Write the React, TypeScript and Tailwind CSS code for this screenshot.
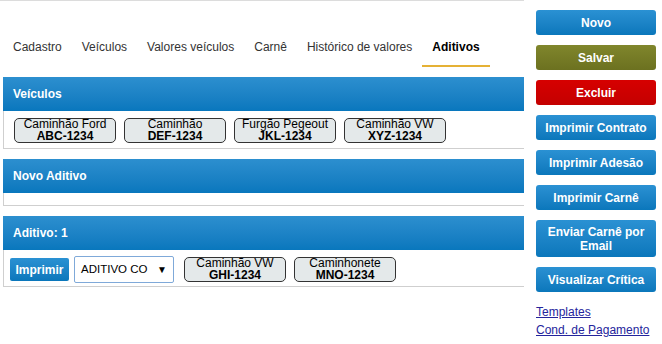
import type { ReactNode } from 'react';

const tabs = ['Cadastro', 'Veículos', 'Valores veículos', 'Carnê', 'Histórico de valores', 'Aditivos'];

const veiculos = [
  { nome: 'Caminhão Ford', placa: 'ABC-1234' },
  { nome: 'Caminhão', placa: 'DEF-1234' },
  { nome: 'Furgão Pegeout', placa: 'JKL-1234' },
  { nome: 'Caminhão VW', placa: 'XYZ-1234' },
];

const aditivoVeiculos = [
  { nome: 'Caminhão VW', placa: 'GHI-1234' },
  { nome: 'Caminhonete', placa: 'MNO-1234' },
];

function Chip({ nome, placa }: { nome: string; placa: string }) {
  return (
    <div className="w-[102px] h-[25px] shrink-0 flex flex-col items-center justify-center rounded-[5px] border border-[#333] bg-[#e4e9ea] text-[12px] leading-[11.5px] text-black overflow-hidden whitespace-nowrap">
      <span>{nome}</span>
      <span className="font-bold">{placa}</span>
    </div>
  );
}

function PanelHeader({ children }: { children: ReactNode }) {
  return (
    <div className="h-[34px] flex items-center pl-[10px] bg-gradient-to-b from-[#2c8fcf] to-[#0877bd] text-white text-[12px] font-bold">
      {children}
    </div>
  );
}

function SideButton({ children, color = 'blue', tall = false }: { children: ReactNode; color?: 'blue' | 'olive' | 'red'; tall?: boolean }) {
  const bg =
    color === 'olive'
      ? 'bg-gradient-to-b from-[#80862c] to-[#6c7120]'
      : color === 'red'
      ? 'bg-gradient-to-b from-[#d60000] to-[#c40000]'
      : 'bg-gradient-to-b from-[#2a91d3] to-[#0a77bb]';
  return (
    <button className={`w-[120px] ${tall ? 'h-[37px]' : 'h-[25px]'} ${bg} rounded-[3px] text-white text-[12px] font-bold leading-[14px] text-center px-2`}>
      {children}
    </button>
  );
}

export default function App() {
  return (
    <div className="w-[662px] h-[344px] bg-white flex font-['Liberation_Sans',Arial,sans-serif] text-[#222] overflow-hidden">
      {/* Main */}
      <div className="w-[524px] shrink-0 border-t border-[#dcdcdc]">
        <div className="flex mt-[29px] pl-[3px] text-[12px]">
          {tabs.map((t) => (
            <div
              key={t}
              className={`px-[10px] pt-[10px] pb-[11px] leading-[14px] border-b-[2px] ${
                t === 'Aditivos' ? 'font-bold border-[#e5b135] text-black' : 'border-transparent text-[#333]'
              }`}
            >
              {t}
            </div>
          ))}
        </div>

        <div className="ml-[3px] mt-[10px]">
          <PanelHeader>Veículos</PanelHeader>
          <div className="border-l border-b border-[#cfcfcf] pl-[10px] pt-[7px] pb-[5px] flex gap-[8px]">
            {veiculos.map((v) => (
              <Chip key={v.placa} {...v} />
            ))}
          </div>

          <div className="mt-[10px]">
            <PanelHeader>Novo Aditivo</PanelHeader>
            <div className="h-[13px] border-l border-b border-[#cfcfcf]" />
          </div>

          <div className="mt-[10px]">
            <PanelHeader>Aditivo: 1</PanelHeader>
            <div className="border-l border-b border-[#cfcfcf] pl-[6px] pt-[6px] pb-[3px] flex items-center">
              <button className="w-[59px] h-[23px] rounded-[2px] bg-gradient-to-b from-[#2a91d3] to-[#0a77bb] text-white text-[12px] font-bold">
                Imprimir
              </button>
              <div className="ml-[5px] w-[100px] h-[27px] border border-[#7fa9d9] rounded-[2px] flex items-center justify-between pl-[6px] pr-[6px] text-[11.5px] text-black">
                <span>ADITIVO CO</span>
                <span className="text-[10px]">▼</span>
              </div>
              <div className="ml-[10px] flex gap-[8px]">
                {aditivoVeiculos.map((v) => (
                  <Chip key={v.placa} {...v} />
                ))}
              </div>
            </div>
          </div>
        </div>
      </div>

      {/* Sidebar */}
      <div className="pl-[12px] pt-[10px] flex flex-col">
        <div className="flex flex-col gap-[10px]">
          <SideButton>Novo</SideButton>
          <SideButton color="olive">Salvar</SideButton>
          <SideButton color="red">Excluir</SideButton>
          <SideButton>Imprimir Contrato</SideButton>
          <SideButton>Imprimir Adesão</SideButton>
          <SideButton>Imprimir Carnê</SideButton>
          <SideButton tall>Enviar Carnê por Email</SideButton>
          <SideButton>Visualizar Crítica</SideButton>
        </div>
        <div className="mt-[11px] flex flex-col text-[12px] leading-[18px] text-[#24249c]">
          <a href="#" className="underline w-fit">Templates</a>
          <a href="#" className="underline w-fit">Cond. de Pagamento</a>
        </div>
      </div>
    </div>
  );
}
